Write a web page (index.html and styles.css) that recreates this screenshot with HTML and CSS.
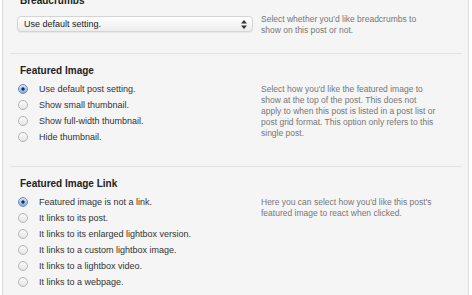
FILE: index.html
```html
<!DOCTYPE html>
<html lang="en">
	<head>
		<meta charset="utf-8">
		<title>Post Options</title>
		<link rel="stylesheet" href="styles.css">
	</head>
	<body>
		<div class="panel">
			<div class="section">
				<h4 class="heading">Breadcrumbs</h4>
				<div class="control">
					<div class="select">
						<span>Use default setting.</span>
						<svg class="select-arrows" width="6" height="9" viewBox="0 0 6 9">
							<path d="M3 0 L6 3.5 L0 3.5 Z M3 9 L6 5.5 L0 5.5 Z" fill="#333"/>
						</svg>
					</div>
				</div>
				<p class="desc">Select whether you'd like breadcrumbs to show on this post or not.</p>
			</div>

			<div class="section">
				<h4 class="heading">Featured Image</h4>
				<ul class="control options">
					<li><span class="radio checked"></span>Use default post setting.</li>
					<li><span class="radio"></span>Show small thumbnail.</li>
					<li><span class="radio"></span>Show full-width thumbnail.</li>
					<li><span class="radio"></span>Hide thumbnail.</li>
				</ul>
				<p class="desc">Select how you'd like the featured image to show at the top of the post. This does not apply to when this post is listed in a post list or post grid format. This option only refers to this single post.</p>
			</div>

			<div class="section">
				<h4 class="heading">Featured Image Link</h4>
				<ul class="control options">
					<li><span class="radio checked"></span>Featured image is not a link.</li>
					<li><span class="radio"></span>It links to its post.</li>
					<li><span class="radio"></span>It links to its enlarged lightbox version.</li>
					<li><span class="radio"></span>It links to a custom lightbox image.</li>
					<li><span class="radio"></span>It links to a lightbox video.</li>
					<li><span class="radio"></span>It links to a webpage.</li>
				</ul>
				<p class="desc">Here you can select how you'd like this post's featured image to react when clicked.</p>
			</div>
		</div>
	</body>
</html>
```

FILE: styles.css
```css
body {
	margin: 0;
	background: #fff;
	font-family: "Liberation Sans", Arial, Helvetica, sans-serif;
	overflow: hidden;
}

.panel {
	margin: -16px 3px 0 2px;
	background: #f5f5f5;
	border-left: 1px solid #dcdcdc;
	border-right: 1px solid #dcdcdc;
}

.section {
	display: grid;
	grid-template-columns: 236px 1fr;
	column-gap: 8px;
	margin: 0 6px 0 7px;
	padding: 10px 24px 0 7px;
	border-bottom: 1px solid #e2e2e2;
}

.heading {
	grid-column: 1 / 3;
	margin: 0 0 0 3px;
	font-size: 10px;
	line-height: 14px;
	font-weight: bold;
	color: #222;
}

.control {
	margin: 3px 0 21px;
}

.desc {
	margin: 0;
	padding-top: 6px;
	font-size: 8.5px;
	line-height: 11px;
	color: #777;
}

.select {
	display: flex;
	align-items: center;
	justify-content: space-between;
	height: 14px;
	margin-top: 5px;
	padding: 0 5px 0 6px;
	border: 1px solid #d4d4d4;
	border-radius: 4px;
	background: linear-gradient(#ffffff, #ececec);
	box-shadow: 0 1px 1px rgba(0, 0, 0, 0.06);
	font-size: 9px;
	color: #222;
}

.options {
	list-style: none;
	padding: 0;
}

.options li {
	display: flex;
	align-items: center;
	height: 16px;
	font-size: 9px;
	color: #333;
}

.radio {
	box-sizing: border-box;
	width: 10px;
	height: 10px;
	margin: 0 11px 0 1px;
	border: 1px solid #b4b4b4;
	border-radius: 50%;
	background: linear-gradient(#fafafa, #e6e6e6);
}

.radio.checked {
	border-color: #6c8fc4;
	background: radial-gradient(circle, #1d2b44 0 1.4px, transparent 1.8px), linear-gradient(#d3e4f8, #7eaee6);
}
```
